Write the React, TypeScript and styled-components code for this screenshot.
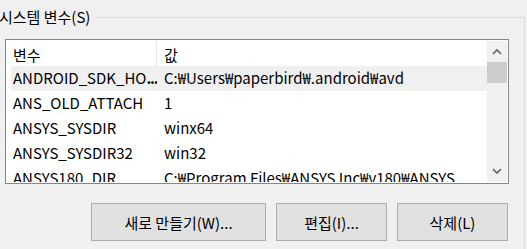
import React from 'react';
import styled, { createGlobalStyle } from 'styled-components';

interface IVariable {
  name: string;
  value: string;
  truncated?: boolean;
}

const variables: IVariable[] = [
  { name: 'ANDROID_SDK_HO', value: 'C:₩Users₩paperbird₩.android₩avd', truncated: true },
  { name: 'ANS_OLD_ATTACH', value: '1' },
  { name: 'ANSYS_SYSDIR', value: 'winx64' },
  { name: 'ANSYS_SYSDIR32', value: 'win32' },
  { name: 'ANSYS180_DIR', value: 'C:₩Program Files₩ANSYS Inc₩v180₩ANSYS' },
];

function Chevron({ up }: { up?: boolean }) {
  return (
    <svg width="10" height="7" viewBox="0 0 10 7">
      <polyline
        points={up ? '1,6 5,2 9,6' : '1,1 5,5 9,1'}
        fill="none"
        stroke="#606060"
        strokeWidth="1.6"
      />
    </svg>
  );
}

export default function App() {
  return (
    <>
      <GlobalStyle />
      <SGroup>
        <SLegend>시스템 변수(S)</SLegend>
        <SListBox>
          <SListInner>
            <SHeader>
              <SHeadCell>변수</SHeadCell>
              <SHeadCell second>값</SHeadCell>
            </SHeader>
            {variables.map((item, index) => (
              <SRow key={item.name} isSelected={index === 0}>
                <SCell>
                  {item.name}
                  {item.truncated && <SDots>...</SDots>}
                </SCell>
                <SCell second>{item.value}</SCell>
              </SRow>
            ))}
          </SListInner>
          <SScrollBar>
            <SArrowButton>
              <Chevron up />
            </SArrowButton>
            <SThumb />
            <STrack />
            <SArrowButton>
              <Chevron />
            </SArrowButton>
          </SScrollBar>
        </SListBox>
        <SButtonRow>
          <SButton width={175}>새로 만들기(W)...</SButton>
          <SButton width={111}>편집(I)...</SButton>
          <SButton width={111}>삭제(L)</SButton>
        </SButtonRow>
      </SGroup>
    </>
  );
}

const GlobalStyle = createGlobalStyle`
  html, body {
    margin: 0;
    padding: 0;
    background: #f0f0f0;
    overflow: hidden;
  }
  body {
    font-family: "Noto Sans CJK KR", "Noto Sans", sans-serif;
    font-size: 15px;
    color: #000;
  }
`;

const SGroup = styled.fieldset`
  box-sizing: border-box;
  width: 525px;
  height: 242px;
  margin: 7px 0 0 0;
  padding: 0;
  min-width: 0;
  border: 1px solid #dcdcdc;
  border-left: none;
  border-bottom: none;
`;
const SLegend = styled.legend`
  padding: 0 4px 0 0;
  margin-left: -1px;
  line-height: 20px;
  font-size: 15px;
`;
const SListBox = styled.div`
  box-sizing: border-box;
  display: flex;
  width: 504px;
  height: 145px;
  margin: 12px 0 0 5px;
  padding: 1px;
  border: 1px solid #828790;
  background: #fff;
`;
const SListInner = styled.div`
  flex: 1;
  min-width: 0;
  overflow: hidden;
  padding-left: 4px;
`;
const SHeader = styled.div`
  display: grid;
  grid-template-columns: 146px 1fr;
  height: 25px;
`;
const SHeadCell = styled.div<{ second?: boolean }>`
  display: flex;
  align-items: center;
  padding: 1px 0 0 ${({ second }) => (second ? '7px' : '2px')};
  border-right: ${({ second }) => (second ? 'none' : '1px solid #e5e5e5')};
  height: 25px;
  box-sizing: border-box;
`;
const SRow = styled.div<{ isSelected: boolean }>`
  display: grid;
  grid-template-columns: 146px 1fr;
  height: 25px;
  align-items: center;
  background-color: ${({ isSelected }) => (isSelected ? '#f0f0f0' : '#fff')};
`;
const SCell = styled.div<{ second?: boolean }>`
  padding: 0 0 2px ${({ second }) => (second ? '7px' : '2px')};
  white-space: nowrap;
  overflow: hidden;
  line-height: 22px;
`;
const SDots = styled.span`
  letter-spacing: -1.2px;
  font-weight: 700;
`;
const SScrollBar = styled.div`
  display: flex;
  flex-direction: column;
  width: 20px;
  background: #f0f0f0;
`;
const SArrowButton = styled.div`
  display: flex;
  align-items: center;
  justify-content: center;
  height: 21px;
`;
const SThumb = styled.div`
  height: 21px;
  background: #cdcdcd;
`;
const STrack = styled.div`
  flex: 1;
`;
const SButtonRow = styled.div`
  display: flex;
  justify-content: flex-end;
  gap: 10px;
  margin-top: 19px;
  padding-right: 16px;
`;
const SButton = styled.button<{ width: number }>`
  box-sizing: border-box;
  width: ${({ width }) => width}px;
  height: 38px;
  padding: 0;
  border: 1px solid #adadad;
  background: #e1e1e1;
  font-family: inherit;
  font-size: 15px;
  color: #000;
`;
